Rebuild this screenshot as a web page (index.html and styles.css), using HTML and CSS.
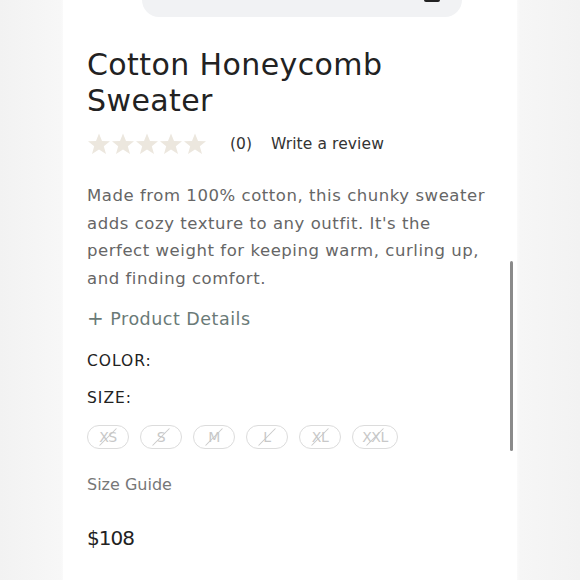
FILE: index.html
```html
<!DOCTYPE html>
<html>
<head>
<meta charset="utf-8">
<link rel="stylesheet" href="styles.css">
</head>
<body>
<div class="page">
  <div class="panel">
    <div class="topbar"><span class="topicon"></span></div>
    <h1 class="title">Cotton Honeycomb Sweater</h1>
    <div class="rating">
      <div class="stars">
        <svg viewBox="0 0 24 24"><polygon points="12,1.5 15,9 23,9.2 16.8,14.2 19,22 12,17.5 5,22 7.2,14.2 1,9.2 9,9"/></svg>
        <svg viewBox="0 0 24 24"><polygon points="12,1.5 15,9 23,9.2 16.8,14.2 19,22 12,17.5 5,22 7.2,14.2 1,9.2 9,9"/></svg>
        <svg viewBox="0 0 24 24"><polygon points="12,1.5 15,9 23,9.2 16.8,14.2 19,22 12,17.5 5,22 7.2,14.2 1,9.2 9,9"/></svg>
        <svg viewBox="0 0 24 24"><polygon points="12,1.5 15,9 23,9.2 16.8,14.2 19,22 12,17.5 5,22 7.2,14.2 1,9.2 9,9"/></svg>
        <svg viewBox="0 0 24 24"><polygon points="12,1.5 15,9 23,9.2 16.8,14.2 19,22 12,17.5 5,22 7.2,14.2 1,9.2 9,9"/></svg>
      </div>
      <span class="count">(0)</span>
      <span class="write">Write a review</span>
    </div>
    <p class="desc">Made from 100% cotton, this chunky sweater<br>adds cozy texture to any outfit. It's the<br>perfect weight for keeping warm, curling up,<br>and finding comfort.</p>
    <div class="details"><span class="plus">+</span> Product Details</div>
    <div class="label color-label">COLOR:</div>
    <div class="label size-label">SIZE:</div>
    <div class="sizes">
      <span class="pill">XS</span>
      <span class="pill">S</span>
      <span class="pill">M</span>
      <span class="pill">L</span>
      <span class="pill">XL</span>
      <span class="pill">XXL</span>
    </div>
    <div class="guide">Size Guide</div>
    <div class="price">$108</div>
    <div class="scrollbar"></div>
  </div>
</div>
</body>
</html>
```

FILE: styles.css
```css
* { box-sizing: border-box; }
html, body { margin: 0; padding: 0; }
body {
  width: 580px;
  height: 580px;
  overflow: hidden;
  background: linear-gradient(to right, #f2f2f2 0px, #f7f7f7 60px, #fafafa 63px, #fafafa 517px, #f6f6f6 520px, #f2f2f2 580px);
  font-family: "DejaVu Sans", sans-serif;
}
.page {
  display: flex;
  justify-content: center;
  height: 580px;
}
.panel {
  position: relative;
  width: 454px;
  background: #fff;
  padding: 0 24px;
  height: 580px;
}
.topbar {
  position: relative;
  margin: 0 31px 0 55px;
  height: 17px;
  background: #f1f2f4;
  border-radius: 0 0 22px 22px;
}
.topicon {
  position: absolute;
  right: 22px;
  top: 0;
  width: 16px;
  height: 2px;
  background: #222;
  border-radius: 0 0 2px 2px;
}
.title {
  margin: 30px 0 0 0;
  font-weight: 400;
  font-size: 30px;
  line-height: 36px;
  letter-spacing: 0.4px;
  color: #222;
  width: 330px;
}
.rating {
  display: flex;
  align-items: center;
  margin-top: 13px;
  height: 24px;
}
.stars { display: flex; }
.stars svg { width: 24px; height: 24px; fill: #ece7de; }
.count { margin-left: 23px; font-size: 15.5px; color: #333; }
.write { margin-left: 19px; font-size: 15.5px; letter-spacing: 0.1px; color: #333; }
.desc {
  margin: 26px 0 0 0;
  font-size: 16.5px;
  line-height: 27.6px;
  letter-spacing: 0.55px;
  color: #666;
  white-space: nowrap;
}
.details {
  margin-top: 14px;
  font-size: 17.5px;
  letter-spacing: 0.5px;
  color: #6a7a77;
}
.plus { font-size: 20px; }
.label {
  font-size: 15.5px;
  color: #222;
  letter-spacing: 1px;
}
.color-label { margin-top: 22px; }
.size-label { margin-top: 19px; }
.sizes {
  display: flex;
  gap: 11px;
  margin-top: 18px;
}
.pill {
  position: relative;
  display: inline-flex;
  align-items: center;
  justify-content: center;
  width: 42px;
  height: 24px;
  border: 1px solid #dcdcdc;
  border-radius: 12px;
  font-size: 14px;
  color: #c8c8c8;
  letter-spacing: -0.5px;
}
.pill:last-child { width: 46px; }
.pill::after {
  content: "";
  position: absolute;
  left: 50%;
  top: 50%;
  width: 24px;
  height: 1px;
  background: #c8c8c8;
  transform: translate(-50%, -50%) rotate(-45deg);
}
.guide {
  margin-top: 26px;
  font-size: 16px;
  color: #777;
}
.price {
  margin-top: 32px;
  font-size: 20px;
  letter-spacing: -1px;
  color: #222;
}
.scrollbar {
  position: absolute;
  left: 447px;
  top: 261px;
  width: 3px;
  height: 190px;
  border-radius: 2px;
  background: #8a8a8a;
}
```
